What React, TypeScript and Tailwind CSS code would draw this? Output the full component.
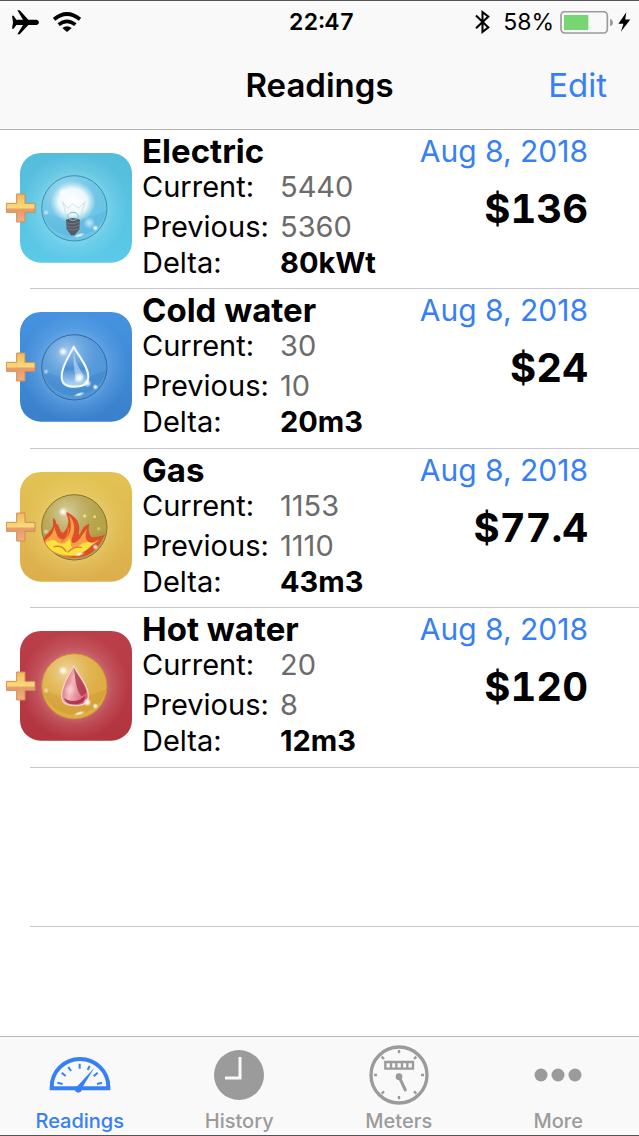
import type { ReactNode } from 'react';

type MeterKind = 'electric' | 'cold' | 'gas' | 'hot';

interface Meter {
  kind: MeterKind;
  name: string;
  current: string;
  previous: string;
  delta: string;
  date: string;
  cost: string;
}

const meters: Meter[] = [
  { kind: 'electric', name: 'Electric', current: '5440', previous: '5360', delta: '80kWt', date: 'Aug 8, 2018', cost: '$136' },
  { kind: 'cold', name: 'Cold water', current: '30', previous: '10', delta: '20m3', date: 'Aug 8, 2018', cost: '$24' },
  { kind: 'gas', name: 'Gas', current: '1153', previous: '1110', delta: '43m3', date: 'Aug 8, 2018', cost: '$77.4' },
  { kind: 'hot', name: 'Hot water', current: '20', previous: '8', delta: '12m3', date: 'Aug 8, 2018', cost: '$120' },
];

const palettes = {
  electric: { top: '#55bddc', bottom: '#5bc9e8', glow: '#a5e6f5', ball: '#6cc4e6', ballEdge: '#5cb8de', rim: '#3f8fac' },
  cold: { top: '#4593e0', bottom: '#3a80cb', glow: '#8ac2f3', ball: '#5398da', ballEdge: '#3f85cc', rim: '#34699c' },
  gas: { top: '#e2c352', bottom: '#dcae4c', glow: '#f0da80', ball: '#b5a24a', ballEdge: '#a8953f', rim: '#857329' },
  hot: { top: '#bb3f49', bottom: '#b2343e', glow: '#e09aa2', ball: '#dfaf45', ballEdge: '#d19a33', rim: '#c98a35' },
};

function Bulb() {
  return (
    <>
      <ellipse cx="219" cy="209" rx="66" ry="60" fill="url(#bulb-light)" />
      <path d="M188 206l13 54M256 206l-17 54M190 212l13 16 16-14 16 14 17-16" fill="none" stroke="#c3d5dc" strokeWidth="2" />
      <path d="M198 262q20-10 42 0l-2 29-14 18h-11l-13-18z" fill="#565b63" />
      <path d="M199 271q20 8 40-3M200 281q20 8 38-3M202 291q18 6 34-2" fill="none" stroke="#7b8189" strokeWidth="2.5" />
      <ellipse cx="219" cy="252" rx="16" ry="12" fill="none" stroke="#86bccb" strokeWidth="3" />
      <circle cx="268" cy="272" r="18" fill="url(#sparkle)" opacity=".6" />
    </>
  );
}

function Drop({ hot }: { hot?: boolean }) {
  return (
    <>
      <path
        d="M221 166C209 193 186 221 185 254c-1 24 13 32 39 32s41-8 41-30c0-30-28-60-44-90z"
        fill={hot ? 'url(#drop-hot)' : 'url(#drop-cold)'}
        stroke={hot ? '#f6d3c2' : '#f2f9ff'}
        strokeWidth={hot ? 4 : 6}
        strokeLinejoin="round"
      />
      {hot ? (
        <>
          <path d="M221 172c6 30 4 58 23 86 9-6 14-8 15-14-4-24-24-46-38-72z" fill="#a62f46" opacity=".75" />
          <path d="M192 262c18 14 44 14 64-6-2 18-12 25-32 26-18 0-28-5-32-20z" fill="#9c2640" opacity=".8" />
          <circle cx="208" cy="238" r="20" fill="url(#sparkle)" opacity=".4" />
        </>
      ) : (
        <>
          <path d="M222 182c2 30 18 50 28 70-4 14-12 20-26 22 6-24-8-52-2-92z" fill="#cfe5f8" opacity=".55" />
          <circle cx="238" cy="260" r="17" fill="url(#sparkle)" />
        </>
      )}
      <circle cx="262" cy="276" r="13" fill="url(#sparkle)" />
    </>
  );
}

function Flame() {
  return (
    <>
      <path
        d="M130 266c6-20 24-24 29-42 2-10-3-18 2-24 5 5 8 11 8 18 8-2 8 20 20 27 9-8 17-22 16-38-1-10-7-17-6-26 22 12 38 24 39 48 0 9-3 17-1 23 7-8 10-29 31-35-4 18-2 32 8 41 14 0 26-2 40-9-8 12-14 26-24 39-16 20-40 31-68 31-44 0-82-18-94-53z"
        fill="#de4e2a"
      />
      <path
        d="M134 268c18-14 26-22 29-42 6 24 13 42 30 38 22-12 24-46 13-74 24 26 18 52 9 73-3 10 5 16 12 10 14-8 20-26 34-40-6 20-6 34 8 40 8 3 18-2 30-9-10 16-36 18-49 34-10 12-34 20-54 17-30-4-50-18-62-47z"
        fill="#f5a044"
      />
      <path
        d="M136 274c14-9 26-10 32-5 12 13 31 10 42-8 4 10-2 24 10 30 13-1 20-13 32-17 12-4 24 4 34-1-20 18-38 38-72 39-40-1-66-14-78-38z"
        fill="#fbe33b"
      />
      <path d="M162 286q24-6 36 14M204 302q18-18 40-14M184 270q22-10 22-40" fill="none" stroke="#ea7a30" strokeWidth="4" strokeLinecap="round" />
      <circle cx="254" cy="194" r="5" fill="#ece27a" />
      <circle cx="284" cy="196" r="4" fill="#ece27a" />
      <circle cx="296" cy="232" r="5" fill="#e5dc6a" opacity=".7" />
    </>
  );
}

function MeterIcon({ kind }: { kind: MeterKind }) {
  const c = palettes[kind];
  return (
    <svg className="h-[110px] w-[126px]" viewBox="18 62 378 330" aria-hidden="true">
      <defs>
        <linearGradient id={`tile-${kind}`} x1="0" y1="0" x2="0" y2="1">
          <stop offset="0" stopColor={c.top} />
          <stop offset="1" stopColor={c.bottom} />
        </linearGradient>
        <radialGradient id={`glow-${kind}`}>
          <stop offset=".5" stopColor={c.glow} />
          <stop offset=".72" stopColor={c.glow} stopOpacity=".4" />
          <stop offset="1" stopColor={c.glow} stopOpacity="0" />
        </radialGradient>
        <radialGradient id={`ball-${kind}`} cx=".38" cy=".28" r=".6">
          <stop offset="0" stopColor="#fff" stopOpacity=".5" />
          <stop offset="1" stopColor={c.ball} stopOpacity="0" />
        </radialGradient>
        <linearGradient id={`plus-${kind}`} x1="0" y1="0" x2="0" y2="1">
          <stop offset="0" stopColor="#f0b95a" />
          <stop offset=".48" stopColor="#fbd978" />
          <stop offset=".56" stopColor="#e59a68" />
          <stop offset="1" stopColor="#f3ae80" />
        </linearGradient>
        <radialGradient id="sparkle">
          <stop offset="0" stopColor="#fff" />
          <stop offset=".3" stopColor="#fff" stopOpacity=".8" />
          <stop offset="1" stopColor="#fff" stopOpacity="0" />
        </radialGradient>
        <radialGradient id="bulb-light">
          <stop offset="0" stopColor="#fff" />
          <stop offset=".65" stopColor="#fff" stopOpacity=".85" />
          <stop offset="1" stopColor="#dff5fc" stopOpacity=".1" />
        </radialGradient>
        <linearGradient id="drop-cold" x1="0" y1="0" x2="0" y2="1">
          <stop offset="0" stopColor="#a3cbee" />
          <stop offset=".55" stopColor="#4a8fd2" />
          <stop offset="1" stopColor="#b9dbf6" />
        </linearGradient>
        <linearGradient id="drop-hot" x1="0" y1="0" x2="1" y2=".4">
          <stop offset="0" stopColor="#c93a55" />
          <stop offset=".5" stopColor="#f2b7b9" />
          <stop offset="1" stopColor="#d9647a" />
        </linearGradient>
      </defs>
      <rect x="60" y="62" width="336" height="329" rx="62" fill={`url(#tile-${kind})`} />
      <circle cx="223" cy="227" r="162" fill={`url(#glow-${kind})`} opacity=".6" />
      <circle cx="223" cy="228" r="98" fill={c.ball} />
      <path d="M128 236q95 48 190 0a96 90 0 0 1-190 0z" fill={c.ballEdge} opacity=".6" />
      <circle cx="223" cy="228" r="98" fill={`url(#ball-${kind})`} stroke={c.rim} strokeWidth="3" />
      {kind === 'electric' && <Bulb />}
      {kind === 'cold' && <Drop />}
      {kind === 'gas' && <Flame />}
      {kind === 'hot' && <Drop hot />}
      <circle cx="189" cy="181" r="14" fill="url(#sparkle)" />
      <circle cx="286" cy="287" r="9" fill="url(#sparkle)" />
      <circle cx="138" cy="241" r="9" fill="url(#sparkle)" opacity=".6" />
      <ellipse cx="238" cy="309" rx="18" ry="6" fill="url(#sparkle)" transform="rotate(-16 238 309)" />
      <path
        d="M50 185h25v28h30v27H75v29H50v-29H19v-27h31z"
        fill={`url(#plus-${kind})`}
        stroke="#cf8c58"
        strokeWidth="3"
        strokeLinejoin="round"
      />
    </svg>
  );
}

function MeterRow({ meter }: { meter: Meter }) {
  return (
    <li className="flex flex-col">
      <div className="flex flex-1 items-start pl-[6px] pr-[51px]">
        <button type="button" aria-label={`Add ${meter.name} reading`} className="mt-[23px] shrink-0">
          <MeterIcon kind={meter.kind} />
        </button>
        <div className="ml-[10px] mt-[3px] flex-1">
          <h2 className="text-[33px] font-bold leading-9">{meter.name}</h2>
          <dl className="grid grid-cols-[138px_1fr] text-[29px] leading-9">
            <dt>Current:</dt>
            <dd className="text-[#6b6b6b]">{meter.current}</dd>
            <dt className="mt-1">Previous:</dt>
            <dd className="mt-1 text-[#6b6b6b]">{meter.previous}</dd>
            <dt>Delta:</dt>
            <dd className="font-bold">{meter.delta}</dd>
          </dl>
        </div>
        <div className="mt-[3px] text-right">
          <p className="text-[30px] leading-9 text-[#3680f7]">{meter.date}</p>
          <p className="mt-4 text-[40px] font-bold leading-[48px] tabular-nums">{meter.cost}</p>
        </div>
      </div>
      <hr className="ml-[30px] border-[#c8c7cc]" />
    </li>
  );
}

function StatusBar() {
  return (
    <div className="grid h-[42px] grid-cols-[1fr_auto_1fr] items-center pl-[12px] pr-2 text-[23px]">
      <div className="flex items-center gap-[14px]">
        <svg className="h-[25px] w-[27px]" viewBox="36 25 81 75" aria-label="Airplane mode">
          <path d="M36 42h5l8 12h20L52 26h7l26 28h25q7 2 7 8t-7 8H85L59 98h-7l17-28H49l-8 11h-5l3-19z" />
        </svg>
        <svg className="h-5 w-7" viewBox="159 32 84 60" fill="none" stroke="#000" strokeWidth="11" aria-label="Wi-Fi">
          <path d="M162 54Q201 22 240 54M176 70Q201 50 226 70" />
          <path d="M187 80Q201 70 215 80L201 92z" fill="#000" stroke="none" />
        </svg>
      </div>
      <time className="font-semibold tabular-nums">22:47</time>
      <div className="flex items-center justify-end">
        <svg className="mr-[13px] h-6 w-[15px]" viewBox="465 28 44 70" fill="none" stroke="#000" strokeWidth="6" aria-label="Bluetooth">
          <path d="M468 44L504 79 487 92V34L504 47 468 81" />
        </svg>
        <span className="mr-[6px]">58%</span>
        <svg className="mr-[4px] h-[23px] w-[54px]" viewBox="717 30 162 69" aria-label="Battery">
          <rect x="720" y="32" width="139" height="64" rx="11" fill="none" stroke="#9b9b9b" strokeWidth="5" />
          <rect x="729" y="42" width="73" height="45" fill="#76d672" />
          <path d="M867 54q9 3 9 11t-9 10z" fill="#9b9b9b" />
        </svg>
        <svg className="h-5 w-[13px]" viewBox="892 37 36 54" aria-label="Charging">
          <path d="M915 37L893 69h14l-7 22 26-34h-14z" />
        </svg>
      </div>
    </div>
  );
}

function Tab({ label, active, children }: { label: string; active?: boolean; children: ReactNode }) {
  return (
    <a
      href={`#${label.toLowerCase()}`}
      aria-current={active ? 'page' : undefined}
      className={`flex flex-col items-center text-[20px] font-medium leading-6 ${active ? 'text-[#3680f7]' : 'text-[#9b9b9b]'}`}
    >
      <span className="flex h-[72px] items-center pt-[4px]">{children}</span>
      {label}
    </a>
  );
}

function TabBar() {
  return (
    <nav className="grid h-[100px] grid-cols-4 border-b border-t border-b-[#555] border-t-[#b8b8b8] bg-[#f9f9f9] pr-px">
      <Tab label="Readings" active>
        <svg className="h-9 w-[62px]" viewBox="144 84 186 108" fill="none" stroke="currentColor" aria-hidden="true">
          <path d="M152 178V174a85 84 0 0 1 170 0v4z" strokeWidth="12" />
          <path d="M169 161l16 4M182 131l12 10M202 114l8 12M236 104v15M260 123l6-12M278 142l12-11M288 165l15-4" strokeWidth="6" />
          <path d="M280 116L224 177l14 8z" fill="currentColor" stroke="none" />
          <circle cx="232" cy="181" r="10" fill="currentColor" stroke="none" />
        </svg>
      </Tab>
      <Tab label="History">
        <svg className="size-[50px]" viewBox="0 0 50 50" aria-hidden="true">
          <circle cx="25" cy="25" r="25" fill="currentColor" />
          <path d="M26 7v21H11" fill="none" stroke="#f9f9f9" strokeWidth="3" />
        </svg>
      </Tab>
      <Tab label="Meters">
        <svg className="size-[60px]" viewBox="148 43 180 180" fill="none" stroke="currentColor" aria-hidden="true">
          <circle cx="238" cy="133" r="84" strokeWidth="10" />
          <path
            d="M238 58v10M238 196v10M163 133h9M304 133h9M186 78l7 7M290 78l-7 7M186 189l7-7M290 189l-7-7"
            strokeWidth="7"
          />
          <path d="M197 94h83v20h-83zM214 94v20M230 94v20M247 94v20M263 94v20" strokeWidth="7" />
          <circle cx="238" cy="138" r="10" fill="currentColor" stroke="none" />
          <path d="M238 138l19 40" strokeWidth="9" strokeLinecap="round" />
        </svg>
      </Tab>
      <Tab label="More">
        <svg className="h-[14px] w-12" viewBox="0 0 48 14" fill="currentColor" aria-hidden="true">
          <circle cx="7" cy="7" r="6.5" />
          <circle cx="24" cy="7" r="6.5" />
          <circle cx="41" cy="7" r="6.5" />
        </svg>
      </Tab>
    </nav>
  );
}

export default function App() {
  return (
    <div className="flex min-h-screen flex-col bg-white font-['Inter','Liberation_Sans',sans-serif] text-black">
      <header className="h-[130px] border-b border-t border-b-[#b2b2b2] border-t-[#555] bg-[#f9f9f9]">
        <StatusBar />
        <div className="grid h-[86px] grid-cols-[1fr_auto_1fr] items-center px-8">
          <h1 className="col-start-2 text-[33px] font-semibold">Readings</h1>
          <button type="button" className="justify-self-end text-[33px] text-[#3680f7]">
            Edit
          </button>
        </div>
      </header>
      <main className="flex flex-1 flex-col pb-[109px]">
        <ul className="grid flex-1 grid-rows-5">
          {meters.map((meter) => (
            <MeterRow key={meter.kind} meter={meter} />
          ))}
          <li className="ml-[30px] border-b border-[#c8c7cc]" aria-hidden="true" />
        </ul>
      </main>
      <TabBar />
    </div>
  );
}
